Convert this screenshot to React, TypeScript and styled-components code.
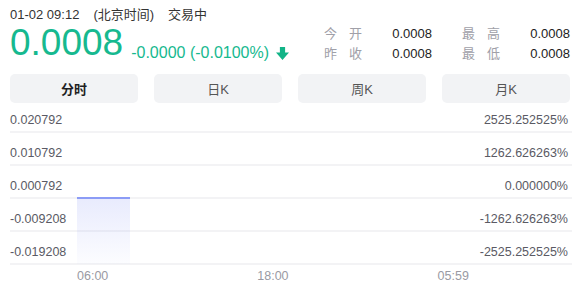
import React from "react";
import styled, { createGlobalStyle } from "styled-components";

const GlobalStyle = createGlobalStyle`
  html, body {
    margin: 0;
    padding: 0;
    background: #fff;
    font-family: "Liberation Sans", "Noto Sans CJK SC", sans-serif;
  }
`;

const UP_DOWN = "#16b98f";

const Page = styled.div`
  width: 572px;
  box-sizing: border-box;
  padding: 7px 2px 0 10px;
`;

const Header = styled.div`
  display: flex;
  justify-content: space-between;
  align-items: flex-start;
  height: 57px;
`;

const QuoteInfo = styled.div`
  display: flex;
  flex-direction: column;
`;

const TimeLine = styled.div`
  display: flex;
  font-size: 13px;
  line-height: 16px;
  height: 16px;
  color: #333;
  span + span {
    margin-left: 14px;
  }
`;

const PriceRow = styled.div`
  display: flex;
  align-items: flex-end;
  height: 40px;
  color: ${UP_DOWN};
`;

const BigPrice = styled.div`
  font-size: 37px;
  line-height: 40px;
`;

const Change = styled.div`
  font-size: 16px;
  line-height: 20px;
  margin-left: 8px;
`;

const Arrow = styled.svg`
  width: 13px;
  height: 13px;
  margin: 0 0 3px 7px;
  fill: #12b487;
`;

const Stats = styled.div`
  display: grid;
  grid-template-columns: 108px 108px;
  column-gap: 30px;
  margin-top: 17px;
  font-size: 13px;
  line-height: 20px;
`;

const StatItem = styled.div`
  display: flex;
  justify-content: space-between;
`;

const StatLabel = styled.span`
  display: flex;
  justify-content: space-between;
  width: 38px;
  color: #a0a0a8;
`;

const StatValue = styled.span`
  color: #222;
`;

const Tabs = styled.div`
  display: grid;
  grid-template-columns: repeat(4, 1fr);
  column-gap: 16px;
  margin-top: 10px;
`;

const Tab = styled.div<{ $active?: boolean }>`
  height: 29px;
  display: flex;
  align-items: center;
  justify-content: center;
  background: #f2f3f5;
  border-radius: 5px;
  font-size: 13px;
  font-weight: ${(p) => (p.$active ? 700 : 400)};
  color: ${(p) => (p.$active ? "#1f1f24" : "#555")};
`;

const Chart = styled.div`
  position: relative;
  margin-right: -2px;
`;

const GridRow = styled.div<{ $first?: boolean }>`
  display: flex;
  justify-content: space-between;
  align-items: flex-end;
  box-sizing: border-box;
  height: ${(p) => (p.$first ? "30px" : "33px")};
  padding: 0 4px 3px 0;
  border-bottom: 2px solid #f3f3f5;
  font-size: 12.5px;
  line-height: 15px;
  color: #5a5a64;
`;

const Overlay = styled.svg`
  position: absolute;
  left: 0;
  top: 0;
  width: 100%;
  height: 100%;
  pointer-events: none;
`;

const TimeAxis = styled.div`
  display: flex;
  gap: 149px;
  padding-left: 67px;
  margin-top: 4px;
  font-size: 12.5px;
  line-height: 15px;
  color: #9a9aa3;
`;

const rows = [
  ["0.020792", "2525.252525%"],
  ["0.010792", "1262.626263%"],
  ["0.000792", "0.000000%"],
  ["-0.009208", "-1262.626263%"],
  ["-0.019208", "-2525.252525%"],
];

const tabs = ["分时", "日K", "周K", "月K"];

export default function App() {
  return (
    <Page>
      <GlobalStyle />
      <Header>
        <QuoteInfo>
          <TimeLine>
            <span>01-02 09:12</span>
            <span>(北京时间)</span>
            <span>交易中</span>
          </TimeLine>
          <PriceRow>
            <BigPrice>0.0008</BigPrice>
            <Change>-0.0000 (-0.0100%)</Change>
            <Arrow viewBox="0 0 12 12">
              <path d="M3.6 0h4.8v5h3.6L6 12 0 5h3.6z" />
            </Arrow>
          </PriceRow>
        </QuoteInfo>
        <Stats>
          <StatItem>
            <StatLabel><span>今</span><span>开</span></StatLabel>
            <StatValue>0.0008</StatValue>
          </StatItem>
          <StatItem>
            <StatLabel><span>最</span><span>高</span></StatLabel>
            <StatValue>0.0008</StatValue>
          </StatItem>
          <StatItem>
            <StatLabel><span>昨</span><span>收</span></StatLabel>
            <StatValue>0.0008</StatValue>
          </StatItem>
          <StatItem>
            <StatLabel><span>最</span><span>低</span></StatLabel>
            <StatValue>0.0008</StatValue>
          </StatItem>
        </Stats>
      </Header>
      <Tabs>
        {tabs.map((t, i) => (
          <Tab key={t} $active={i === 0}>
            {t}
          </Tab>
        ))}
      </Tabs>
      <Chart>
        {rows.map(([l, r], i) => (
          <GridRow key={l} $first={i === 0}>
            <span>{l}</span>
            <span>{r}</span>
          </GridRow>
        ))}
        <Overlay>
          <defs>
            <linearGradient id="areaFill" x1="0" y1="0" x2="0" y2="1">
              <stop offset="0" stopColor="#6f80f2" stopOpacity="0.16" />
              <stop offset="1" stopColor="#6f80f2" stopOpacity="0.02" />
            </linearGradient>
          </defs>
          <rect x="67" y="94" width="53" height="67" fill="url(#areaFill)" />
          <rect x="67" y="94" width="53" height="2" fill="#8c9cf6" />
        </Overlay>
      </Chart>
      <TimeAxis>
        <span>06:00</span>
        <span>18:00</span>
        <span>05:59</span>
      </TimeAxis>
    </Page>
  );
}
